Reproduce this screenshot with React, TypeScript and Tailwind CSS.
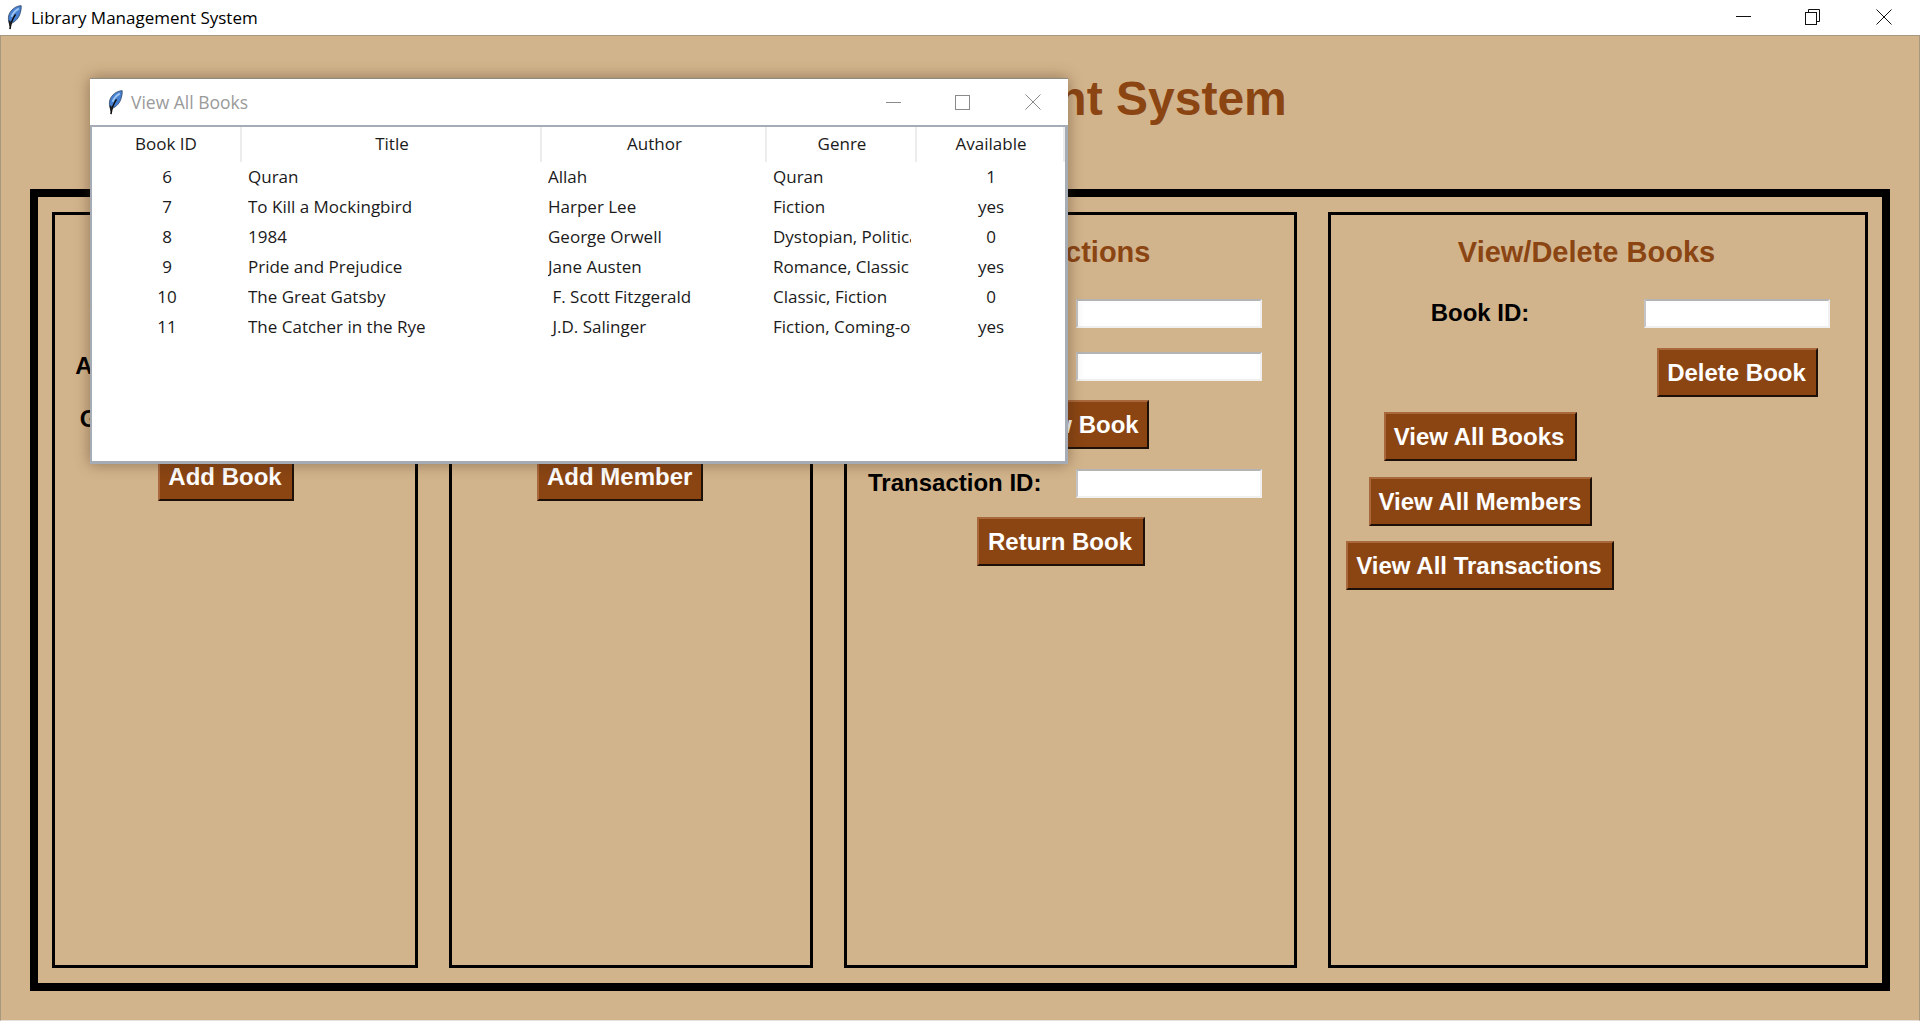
import React from "react";

const Feather = ({ className }: { className?: string }) => (
  <svg viewBox="0 0 14 24" className={className}>
    <path d="M13.4 0.6 C8 1 3.2 4.6 1.6 9.6 C0.8 12.4 1 15.4 2.2 18 C6.5 17.4 10.4 13.6 12 9.2 C13 6.4 13.6 3.2 13.4 0.6 Z" fill="#4680d2" stroke="#2f4666" strokeWidth="0.8" />
    <path d="M11.2 3.4 C8 5 5.4 8 4.2 11.4" fill="none" stroke="#9cc4f0" strokeWidth="1.8" />
    <path d="M8 9 C5.6 12.4 3.4 17 2.6 23.2" fill="none" stroke="#0d0d0d" strokeWidth="1.5" />
    <path d="M1.6 14.5 C1.4 17 1.6 19 2.2 20.8 L4.6 17 Z" fill="#1d1d1d" />
  </svg>
);

const MinIcon = ({ color }: { color: string }) => (
  <svg width="15" height="1" className="block"><rect width="15" height="1" fill={color} /></svg>
);
const CloseIcon = ({ color }: { color: string }) => (
  <svg width="16" height="16" className="block"><path d="M0.5 0.5 L15.5 15.5 M15.5 0.5 L0.5 15.5" stroke={color} strokeWidth="1" fill="none" /></svg>
);
const RestoreIcon = () => (
  <svg width="15" height="16" className="block" fill="none" stroke="#111" strokeWidth="1">
    <rect x="0.5" y="3.5" width="11" height="12" />
    <path d="M3.5 3.5 V0.5 H14.5 V12.5 H11.5" />
  </svg>
);

const Btn = ({ children, className = "" }: { children: React.ReactNode; className?: string }) => (
  <button className={`h-[49px] shrink-0 border-2 border-t-[#a9683c] border-l-[#a9683c] border-r-[#1c1008] border-b-[#1c1008] bg-[#8B4513] pr-[10px] pl-[8px] text-[24px] leading-none font-bold whitespace-nowrap text-white ${className}`}>
    {children}
  </button>
);

const Entry = ({ className = "" }: { className?: string }) => (
  <div className={`h-[29px] w-[186px] shrink-0 border-2 border-t-[#b4b4b4] border-r-[#f0f0f0] border-b-[#f0f0f0] border-l-[#c4c4c4] bg-white ${className}`} />
);

const Label = ({ children }: { children: React.ReactNode }) => (
  <span className="block h-[29px] text-[24px] leading-[27px] font-bold whitespace-nowrap text-black">{children}</span>
);

const Heading = ({ children }: { children: React.ReactNode }) => (
  <h2 className="h-[34px] text-center text-[29px] leading-[34px] font-bold whitespace-nowrap text-[#8B4513]">{children}</h2>
);

const FormRow = ({ label, labelCol = "w-[127px]", className = "" }: { label: string; labelCol?: string; className?: string }) => (
  <div className={`flex items-center ${className}`}>
    <div className={`${labelCol} shrink-0 text-center`}><Label>{label}</Label></div>
    <Entry className="ml-[37px]" />
  </div>
);

const rows = [
  ["6", "Quran", "Allah", "Quran", "1"],
  ["7", "To Kill a Mockingbird", "Harper Lee", "Fiction", "yes"],
  ["8", "1984", "George Orwell", "Dystopian, Political Fiction", "0"],
  ["9", "Pride and Prejudice", "Jane Austen", "Romance, Classic", "yes"],
  ["10", "The Great Gatsby", " F. Scott Fitzgerald", "Classic, Fiction", "0"],
  ["11", "The Catcher in the Rye", " J.D. Salinger", "Fiction, Coming-of-age", "yes"],
];
const headers = ["Book ID", "Title", "Author", "Genre", "Available"];
const widths = ["w-[150px]", "w-[300px]", "w-[225px]", "w-[150px]", "w-[148px]"];

const BooksWindow = () => (
  <div className="absolute top-[42px] left-[89px] flex h-[386px] w-[978px] flex-col bg-white shadow-[0_0_14px_rgba(60,40,20,0.45)]" style={{ fontFamily: '"Open Sans", sans-serif' }}>
    <div className="flex h-[47px] shrink-0 items-center border-t border-[#8f8a80] pl-[18px]">
      <Feather className="h-[25px] w-[15px]" />
      <span className="ml-[8px] text-[17.5px] text-[#9a9a9a]">View All Books</span>
      <div className="ml-auto flex items-center">
        <MinIcon color="#8a8a8a" />
        <div className="ml-[54px] h-[15px] w-[15px] border border-[#8a8a8a]" />
        <div className="mr-[27px] ml-[55px]"><CloseIcon color="#8a8a8a" /></div>
      </div>
    </div>
    <div className="flex flex-1 flex-col border-t-2 border-r-[3px] border-b-[3px] border-l-2 border-[#a5acb5]">
      <div className="flex h-[35px] shrink-0">
        {headers.map((h, i) => (
          <div key={h} className={`${widths[i]} flex items-center justify-center border-r-2 border-[#ececec] pb-[2px] ${i === 0 ? "" : "pl-[2px]"} text-[17px] text-[#1a1a1a]`}>{h}</div>
        ))}
      </div>
      {rows.map((r) => (
        <div key={r[0]} className="flex h-[30px] shrink-0 items-center text-[17px] text-[#1a1a1a]">
          {r.map((c, i) => (
            <div key={i} className={`${widths[i]} shrink-0 ${i === 0 || i === 4 ? "text-center" : "pr-[6px] pl-[6px]"}`}>
              <div className="overflow-hidden whitespace-pre">{c}</div>
            </div>
          ))}
        </div>
      ))}
    </div>
  </div>
);

export default function App() {
  return (
    <div className="flex h-[1021px] w-[1920px] flex-col overflow-hidden bg-white" style={{ fontFamily: '"Liberation Sans", Arial, sans-serif' }}>
      <header className="flex h-[36px] shrink-0 items-center border-b border-[#a8987f] pl-[7px]" style={{ fontFamily: '"Open Sans", sans-serif' }}>
        <Feather className="h-[25px] w-[15px]" />
        <span className="mt-px ml-[9px] text-[17px] text-black">Library Management System</span>
        <div className="mb-[2px] ml-auto flex items-center">
          <MinIcon color="#111" />
          <div className="ml-[54px]"><RestoreIcon /></div>
          <div className="mr-[28px] ml-[56px]"><CloseIcon color="#111" /></div>
        </div>
      </header>

      <main className="relative flex flex-1 flex-col border-x border-b border-x-[#a8987f] border-b-[#e4e0da] bg-[#D2B48C]">
        <div className="flex h-[153px] shrink-0 items-center justify-center pb-[27px]">
          <h1 className="text-[48px] leading-none font-bold whitespace-nowrap text-[#8B4513]">Library Management System</h1>
        </div>

        <div className="mx-[29px] flex h-[802px] shrink-0 gap-[31px] border-[8px] border-black py-[15px] pr-[14px] pl-[14px]">
          {/* Add book */}
          <section className="flex h-[756px] w-[366px] shrink-0 flex-col border-[3px] border-black pt-[20px]">
            <Heading>Add Book</Heading>
            <div className="mt-[30px] flex flex-col gap-[24px]">
              <FormRow label="Title:" />
              <FormRow label="Author:" />
              <FormRow label="Genre:" />
            </div>
            <Btn className="mt-[18px] ml-[103px] w-[136px]">Add Book</Btn>
          </section>

          {/* Add member */}
          <section className="flex h-[756px] w-[364px] shrink-0 flex-col border-[3px] border-black pt-[20px]">
            <Heading>Add Member</Heading>
            <div className="mt-[30px] flex flex-col gap-[24px]">
              <FormRow label="Name:" />
              <FormRow label="Email:" />
              <FormRow label="Phone:" />
            </div>
            <Btn className="mt-[18px] ml-[85px] w-[166px]">Add Member</Btn>
          </section>

          {/* Transactions */}
          <section className="flex h-[756px] w-[453px] shrink-0 flex-col border-[3px] border-black pt-[20px] pl-[21px]">
            <div className="w-[386px]"><Heading>Transactions</Heading></div>
            <div className="mt-[30px] flex flex-col gap-[24px]">
              <FormRow label="Book ID:" labelCol="w-[171px]" />
              <FormRow label="Member ID:" labelCol="w-[171px]" />
            </div>
            <Btn className="mt-[19px] ml-[110px] w-[171px]">Borrow Book</Btn>
            <FormRow label="Transaction ID:" labelCol="w-[171px]" className="mt-[20px]" />
            <Btn className="mt-[19px] ml-[109px] w-[168px]">Return Book</Btn>
          </section>

          {/* View / delete */}
          <section className="flex h-[756px] w-[540px] shrink-0 flex-col border-[3px] border-black pt-[20px]">
            <div className="w-[511px]"><Heading>View/Delete Books</Heading></div>
            <div className="mt-[30px] grid grid-cols-[298px_216px] items-center">
              <div className="text-center"><Label>Book ID:</Label></div>
              <Entry className="ml-[15px]" />
            </div>
            <Btn className="mt-[20px] ml-[326px] w-[161px]">Delete Book</Btn>
            <div className="mt-[15px] flex w-[298px] flex-col items-center">
              <Btn className="w-[193px]">View All Books</Btn>
              <Btn className="mt-[16px] w-[223px]">View All Members</Btn>
              <Btn className="mt-[15px] w-[268px]">View All Transactions</Btn>
            </div>
          </section>
        </div>

        <BooksWindow />
      </main>
    </div>
  );
}
